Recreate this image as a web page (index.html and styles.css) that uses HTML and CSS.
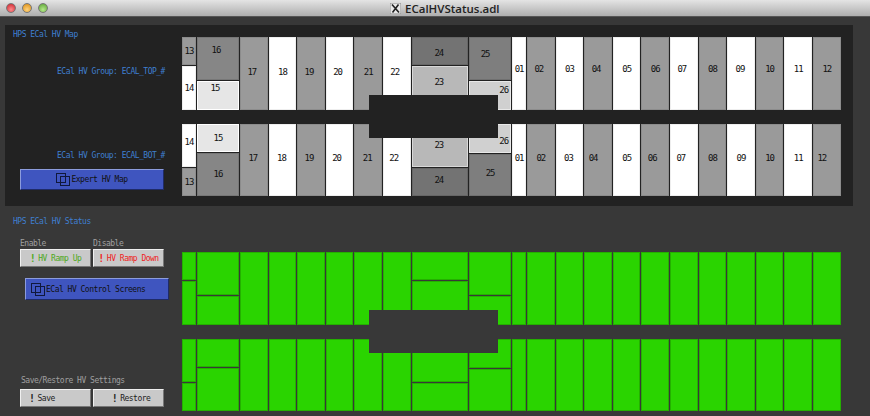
FILE: index.html
```html
<!DOCTYPE html>
<html lang="en">

<head>
  <meta charset="UTF-8">
  <title>ECalHVStatus.adl</title>
  <link rel="stylesheet" href="styles.css">
</head>

<body>

  <div class="titlebar">
    <div class="lights">
      <span class="light red"></span>
      <span class="light amber"></span>
      <span class="light green"></span>
    </div>
    <div class="title">
      <svg class="x-icon" width="11" height="11" viewBox="0 0 11 11">
        <rect width="11" height="11" fill="#e8e8e8" stroke="#8a8a8a"/>
        <path d="M2 1.5 L9 9.5 M8.5 1.5 L2.5 9.5" stroke="#222" stroke-width="1.6"/>
      </svg>
      <span>ECalHVStatus.adl</span>
    </div>
  </div>

  <div class="panel">
    <div class="side">
      <div class="heading">HPS ECal HV Map</div>
      <div class="group group-top">ECal HV Group: ECAL_TOP_#</div>
      <div class="group group-bot">ECal HV Group: ECAL_BOT_#</div>
      <button class="btn btn-blue btn-expert">
        <svg class="stack" width="14" height="13" viewBox="0 0 14 13">
          <rect x="0.5" y="0.5" width="9" height="9"/>
          <rect x="4.5" y="3.5" width="9" height="9"/>
        </svg>Expert HV Map
      </button>
    </div>

    <div class="maps">
      <div class="map">
        <div class="col"><div class="cell gray t1">13</div><div class="cell white rest">14</div></div>
        <div class="col"><div class="cell g16 t2 u16 l4">16</div><div class="cell g15 rest u14 l6">15</div></div>
        <div class="col"><div class="cell gray rest u4 l4">17</div></div>
        <div class="col"><div class="cell white rest u4">18</div></div>
        <div class="col"><div class="cell gray rest u4 l4">19</div></div>
        <div class="col"><div class="cell white rest u4 l4">20</div></div>
        <div class="col"><div class="cell gray rest u4">21</div></div>
        <div class="col"><div class="cell white rest u4 l4">22</div></div>
        <div class="col"><div class="cell g24 t1 d4 l2">24</div><div class="cell g23 rest u12 l2">23</div></div>
        <div class="col"><div class="cell g25 t2 u8 l10">25</div><div class="cell g26 rest u10 end">26</div></div>
        <div class="col"><div class="cell white rest u9">01</div></div>
        <div class="col"><div class="cell gray rest u9 l4">02</div></div>
        <div class="col"><div class="cell white rest u9">03</div></div>
        <div class="col"><div class="cell gray rest u9 l4">04</div></div>
        <div class="col"><div class="cell white rest u9">05</div></div>
        <div class="col"><div class="cell gray rest u9">06</div></div>
        <div class="col"><div class="cell white rest u9 l4">07</div></div>
        <div class="col"><div class="cell gray rest u9">08</div></div>
        <div class="col"><div class="cell white rest u9 l2">09</div></div>
        <div class="col"><div class="cell gray rest u9">10</div></div>
        <div class="col"><div class="cell white rest u9">11</div></div>
        <div class="col"><div class="cell gray rest u9">12</div></div>
      </div>

      <div class="map map-bot">
        <div class="col"><div class="cell white t2 u6">14</div><div class="cell gray rest">13</div></div>
        <div class="col"><div class="cell g15 t1">15</div><div class="cell g16 rest u2">16</div></div>
        <div class="col"><div class="cell gray rest u4 l2">17</div></div>
        <div class="col"><div class="cell white rest u4 l2">18</div></div>
        <div class="col"><div class="cell gray rest u4 l4">19</div></div>
        <div class="col"><div class="cell white rest u4 l6">20</div></div>
        <div class="col"><div class="cell gray rest u4 l2">21</div></div>
        <div class="col"><div class="cell white rest u4 l6">22</div></div>
        <div class="col"><div class="cell g23 t3 d22 l2">23</div><div class="cell g24 rest u4 l2">24</div></div>
        <div class="col"><div class="cell g26 t4 d4 end">26</div><div class="cell g25 rest u4">25</div></div>
        <div class="col"><div class="cell white rest u4">01</div></div>
        <div class="col"><div class="cell gray rest u4">02</div></div>
        <div class="col"><div class="cell white rest u4 l2">03</div></div>
        <div class="col"><div class="cell gray rest u4 l10">04</div></div>
        <div class="col"><div class="cell white rest u4">05</div></div>
        <div class="col"><div class="cell gray rest u4 l6">06</div></div>
        <div class="col"><div class="cell white rest u4 l6">07</div></div>
        <div class="col"><div class="cell gray rest u4">08</div></div>
        <div class="col"><div class="cell white rest u4">09</div></div>
        <div class="col"><div class="cell gray rest u4">10</div></div>
        <div class="col"><div class="cell white rest u4">11</div></div>
        <div class="col"><div class="cell gray rest u4 l10">12</div></div>
      </div>

      <div class="gap-block"></div>
    </div>
  </div>

  <div class="status">
    <div class="side">
      <div class="heading">HPS ECal HV Status</div>
      <div class="pair pair-labels">
        <span class="caption">Enable</span>
        <span class="caption">Disable</span>
      </div>
      <div class="pair">
        <button class="btn btn-gray txt-green"><b class="bang">!</b>HV Ramp Up</button>
        <button class="btn btn-gray txt-red"><b class="bang">!</b>HV Ramp Down</button>
      </div>
      <button class="btn btn-blue btn-control">
        <svg class="stack" width="14" height="13" viewBox="0 0 14 13">
          <rect x="0.5" y="0.5" width="9" height="9"/>
          <rect x="4.5" y="3.5" width="9" height="9"/>
        </svg>ECal HV Control Screens
      </button>
      <div class="caption caption-save">Save/Restore HV Settings</div>
      <div class="pair">
        <button class="btn btn-gray btn-save"><b class="bang">!</b>Save</button>
        <button class="btn btn-gray btn-restore"><b class="bang">!</b>Restore</button>
      </div>
    </div>

    <div class="maps maps-green">
      <div class="map">
        <div class="col"><div class="cell lit t1"></div><div class="cell lit rest"></div></div>
        <div class="col"><div class="cell lit t2"></div><div class="cell lit rest"></div></div>
        <div class="col"><div class="cell lit rest"></div></div>
        <div class="col"><div class="cell lit rest"></div></div>
        <div class="col"><div class="cell lit rest"></div></div>
        <div class="col"><div class="cell lit rest"></div></div>
        <div class="col"><div class="cell lit rest"></div></div>
        <div class="col"><div class="cell lit rest"></div></div>
        <div class="col"><div class="cell lit t1"></div><div class="cell lit rest"></div></div>
        <div class="col"><div class="cell lit t2"></div><div class="cell lit rest"></div></div>
        <div class="col"><div class="cell lit rest"></div></div>
        <div class="col"><div class="cell lit rest"></div></div>
        <div class="col"><div class="cell lit rest"></div></div>
        <div class="col"><div class="cell lit rest"></div></div>
        <div class="col"><div class="cell lit rest"></div></div>
        <div class="col"><div class="cell lit rest"></div></div>
        <div class="col"><div class="cell lit rest"></div></div>
        <div class="col"><div class="cell lit rest"></div></div>
        <div class="col"><div class="cell lit rest"></div></div>
        <div class="col"><div class="cell lit rest"></div></div>
        <div class="col"><div class="cell lit rest"></div></div>
        <div class="col"><div class="cell lit rest"></div></div>
      </div>

      <div class="map map-bot">
        <div class="col"><div class="cell lit t2"></div><div class="cell lit rest"></div></div>
        <div class="col"><div class="cell lit t1"></div><div class="cell lit rest"></div></div>
        <div class="col"><div class="cell lit rest"></div></div>
        <div class="col"><div class="cell lit rest"></div></div>
        <div class="col"><div class="cell lit rest"></div></div>
        <div class="col"><div class="cell lit rest"></div></div>
        <div class="col"><div class="cell lit rest"></div></div>
        <div class="col"><div class="cell lit rest"></div></div>
        <div class="col"><div class="cell lit t2"></div><div class="cell lit rest"></div></div>
        <div class="col"><div class="cell lit t4"></div><div class="cell lit rest"></div></div>
        <div class="col"><div class="cell lit rest"></div></div>
        <div class="col"><div class="cell lit rest"></div></div>
        <div class="col"><div class="cell lit rest"></div></div>
        <div class="col"><div class="cell lit rest"></div></div>
        <div class="col"><div class="cell lit rest"></div></div>
        <div class="col"><div class="cell lit rest"></div></div>
        <div class="col"><div class="cell lit rest"></div></div>
        <div class="col"><div class="cell lit rest"></div></div>
        <div class="col"><div class="cell lit rest"></div></div>
        <div class="col"><div class="cell lit rest"></div></div>
        <div class="col"><div class="cell lit rest"></div></div>
        <div class="col"><div class="cell lit rest"></div></div>
      </div>

      <div class="gap-block"></div>
    </div>
  </div>

</body>

</html>
```

FILE: styles.css
```css
html,
body {
  margin: 0;
  height: 416px;
  overflow: hidden;
}

body {
  background-color: #383838;
  font-family: "DejaVu Sans Mono", "Liberation Mono", monospace;
  font-size: 8px;
  letter-spacing: -0.5px;
}

/* Window title bar */
.titlebar {
  display: flex;
  align-items: center;
  height: 16px;
  background: linear-gradient(#e4e4e4, #aeaeae);
  border-bottom: 1px solid #555;
  position: relative;
}

.lights {
  display: flex;
  gap: 6px;
  padding-left: 6px;
}

.light {
  width: 8px;
  height: 8px;
  border-radius: 50%;
  border: 0.5px solid #777;
}

.red { background: radial-gradient(circle at 50% 70%, #ff8a8a, #c8202a); }
.amber { background: radial-gradient(circle at 50% 70%, #ffd27a, #d88a10); }
.green { background: radial-gradient(circle at 50% 70%, #b4e88a, #58a030); }

.title {
  display: flex;
  align-items: center;
  gap: 4px;
  padding-left: 342px;
  color: #222;
  font-family: "Open Sans", "Liberation Sans", sans-serif;
  font-size: 11.5px;
  font-weight: 600;
  letter-spacing: 0;
}

/* Top dark panel */
.panel {
  display: flex;
  width: 848px;
  height: 181px;
  margin: 8px 0 0 5px;
  padding-top: 12px;
  box-sizing: border-box;
  background-color: #222;
}

.panel .side {
  width: 177px;
  padding-left: 8px;
}

.side {
  box-sizing: border-box;
  flex: none;
}

.heading {
  color: #3f7fd0;
  line-height: 10px;
  margin-top: -7px;
}

.group {
  color: #3f7fd0;
  line-height: 10px;
  margin-left: 44px;
}

.group-top { margin-top: 27px; }
.group-bot { margin-top: 74px; }

/* Buttons */
.btn {
  display: flex;
  align-items: center;
  justify-content: center;
  box-sizing: border-box;
  padding: 0;
  border: 1px solid;
  font: inherit;
  letter-spacing: inherit;
  color: #222;
}

.btn-blue {
  width: 144px;
  background-color: #3f55bf;
  border-color: #8c9cdc #1f2b68 #1f2b68 #8c9cdc;
  color: #111;
}

.btn-gray {
  width: 71px;
  height: 18px;
  background-color: #c9c9c9;
  border-color: #f0f0f0 #777 #777 #f0f0f0;
}

.btn-expert {
  height: 21px;
  margin: 8px 0 0 7px;
}

.btn-control {
  height: 22px;
  margin: 11px 0 0 20px;
  justify-content: flex-start;
  padding-left: 5px;
}

.stack {
  flex: none;
  margin-right: 1px;
}

.stack rect {
  fill: none;
  stroke: #10183c;
}

.bang {
  font-size: 10px;
  margin-right: 3px;
}

.txt-green { color: #4ea820; }
.txt-red { color: #ee2222; }

.btn-save {
  justify-content: flex-start;
  padding-left: 8px;
}

.btn-restore { padding-left: 5px; }

/* Bottom status area */
.status {
  display: flex;
  padding-left: 5px;
}

.status .side {
  width: 177px;
}

.status .heading {
  margin: 11px 0 0 8px;
}

.pair {
  display: flex;
  gap: 2px;
  margin-left: 15px;
}

.pair-labels {
  margin-top: 12px;
  line-height: 10px;
}

.pair-labels .caption {
  width: 71px;
}

.caption {
  color: #a0a0a0;
}

.caption-save {
  margin: 76px 0 3px 16px;
  line-height: 10px;
}

/* Channel maps */
.maps {
  display: flex;
  flex-direction: column;
  gap: 14px;
  position: relative;
  width: 659px;
}

.maps-green {
  margin-top: 46px;
}

.map {
  display: grid;
  grid-template-columns: 14px 42px repeat(6, 27.6px) 56.5px 42px 14px repeat(11, 27.6px);
  gap: 1px;
  height: 73px;
  font-size: 9px;
  letter-spacing: -1px;
  color: #111;
}

.map-bot {
  height: 72px;
}

.col {
  display: flex;
  flex-direction: column;
  gap: 1px;
  min-height: 0;
}

.cell {
  display: flex;
  align-items: center;
  justify-content: center;
  box-sizing: border-box;
  border: 1px solid;
}

.t1 { height: 28px; }
.t2 { height: 42.5px; }
.t3 { height: 43px; }
.t4 { height: 29px; }
.rest { flex: 1; min-height: 0; }

.white { background-color: #fff; border-color: #eee; }
.gray { background-color: #9a9a9a; border-color: #8c8c8c; }
.g15 { background-color: #e6e6e6; border-color: #fff; }
.g16 { background-color: #868686; border-color: #777; }
.g23 { background-color: #b8b8b8; border-color: #d8d8d8; }
.g24 { background-color: #737373; border-color: #666; }
.g25 { background-color: #7e7e7e; border-color: #707070; }
.g26 { background-color: #d0d0d0; border-color: #e8e8e8; }
.lit { background-color: #2ad400; border-color: #24b000; }

/* Label nudges, cell labels are not centred in the original display */
.u2 { padding-bottom: 2px; }
.u4 { padding-bottom: 4px; }
.u6 { padding-bottom: 6px; }
.u8 { padding-bottom: 8px; }
.u9 { padding-bottom: 9px; }
.u10 { padding-bottom: 10px; }
.u12 { padding-bottom: 12px; }
.u14 { padding-bottom: 14px; }
.u16 { padding-bottom: 16px; }
.d4 { padding-top: 4px; }
.d22 { padding-bottom: 2px; padding-top: 0; }
.l2 { padding-right: 2px; }
.l4 { padding-right: 4px; }
.l6 { padding-right: 6px; }
.l10 { padding-right: 10px; }
.end { justify-content: flex-end; padding-right: 2px; }

/* Block covering the middle of the detector, the beam gap */
.gap-block {
  position: absolute;
  left: 187px;
  top: 58px;
  width: 129px;
  height: 43px;
  background-color: #222;
}

.maps-green .gap-block {
  background-color: #383838;
}
```
